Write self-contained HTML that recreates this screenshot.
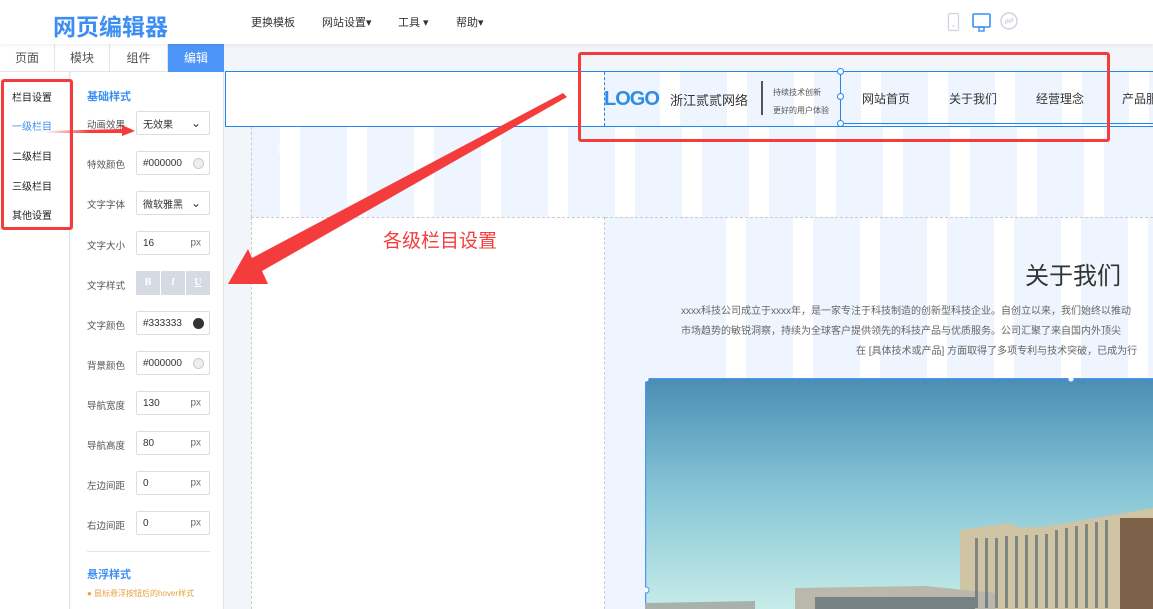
<!DOCTYPE html>
<html><head><meta charset="utf-8"><style>
*{margin:0;padding:0;box-sizing:border-box}
body{width:1153px;height:609px;overflow:hidden;position:relative;background:#f2f5f9;font-family:"Liberation Sans","Noto Sans CJK SC",sans-serif;font-size:10px;color:#333}
.abs{position:absolute}
.top{left:0;top:0;width:1153px;height:44px;background:#fff;box-shadow:0 1px 4px rgba(0,0,0,.08);z-index:3}
.menu span{position:absolute;top:14px;font-size:11px;color:#333}
.tabs{left:0;top:44px;width:224px;height:28px;background:#fff;border-bottom:1px solid #e5e5e5}
.tabs div{position:absolute;top:0;height:28px;line-height:28px;text-align:center;font-size:12px;color:#555;border-right:1px solid #e5e5e5}
.lnav{left:0;top:72px;width:70px;height:537px;background:#fff;border-right:1px solid #e5e5e5}
.lnav div{position:absolute;left:12px;font-size:10px;color:#222}
.panel{left:71px;top:72px;width:153px;height:537px;background:#fff;border-right:1px solid #e5e5e5}
.lab{position:absolute;left:16px;font-size:9.5px;color:#555}
.inp{position:absolute;left:65px;width:74px;height:24px;border:1px solid #ddd;border-radius:2px;background:#fff;font-size:10px;display:flex;align-items:center;padding-left:6px;color:#333}
.inp .px{position:absolute;right:8px;top:50%;transform:translateY(-50%);color:#666}
.inp .dot{position:absolute;right:5px;top:6px;width:11px;height:11px;border-radius:50%}
.stripe{background:repeating-linear-gradient(90deg,#eef5fe 0,#eef5fe 47px,#fff 47px,#fff 67px)}
</style></head><body>
<div class="abs top">
 <div class="abs" style="left:53px;top:8px;font-size:23px;font-weight:bold;color:#3c8ef3">网页编辑器</div>
 <div class="menu"><span style="left:251px">更换模板</span><span style="left:322px">网站设置▾</span><span style="left:398px">工具 ▾</span><span style="left:456px">帮助▾</span></div>
 <svg class="abs" style="left:940px;top:10px" width="90" height="25" viewBox="0 0 90 25">
  <rect x="8.5" y="3.5" width="10" height="17" rx="1.5" fill="none" stroke="#ccd3df" stroke-width="1.2"/><line x1="12" y1="16" x2="15" y2="16" stroke="#ccd3df"/>
  <rect x="33" y="4" width="17" height="13" rx="1" fill="none" stroke="#3c8ef3" stroke-width="1.6"/><rect x="39" y="17" width="5" height="4" fill="none" stroke="#3c8ef3" stroke-width="1.4"/>
  <circle cx="69" cy="11" r="8" fill="none" stroke="#ccd3df" stroke-width="1.4"/><path d="M66 14 a2 2 0 0 1 0-3 l2-2 M72 8 a2 2 0 0 1 0 3 l-2 2 M67 13 L71 9" fill="none" stroke="#ccd3df" stroke-width="1.2"/>
 </svg>
</div>
<div class="abs tabs">
 <div style="left:0;width:55px">页面</div><div style="left:55px;width:55px">模块</div><div style="left:110px;width:58px">组件</div>
 <div style="left:168px;width:56px;background:#4d95f7;color:#fff;border:none">编辑</div>
 <div style="left:191px;top:23px;width:0;height:0;border:5px solid transparent;border-bottom-color:#fff"></div>
</div>
<div class="abs lnav">
 <div style="top:17px">栏目设置</div><div style="top:46px;color:#3c8ef3">一级栏目</div><div style="top:76px">二级栏目</div><div style="top:106px">三级栏目</div><div style="top:135px">其他设置</div>
</div>
<div class="abs panel">
 <div class="abs" style="left:16px;top:16px;font-size:11px;font-weight:bold;color:#3c8ef3">基础样式</div>
 <div class="lab" style="top:45px">动画效果</div><div class="inp" style="top:39px">无效果<span class="px" style="font-size:12px;color:#333">⌄</span></div>
 <div class="lab" style="top:85px">特效颜色</div><div class="inp" style="top:79px">#000000<span class="dot" style="border:1px solid #ccc;background:#eee"></span></div>
 <div class="lab" style="top:125px">文字字体</div><div class="inp" style="top:119px">微软雅黑<span class="px" style="font-size:12px;color:#333">⌄</span></div>
 <div class="lab" style="top:166px">文字大小</div><div class="inp" style="top:159px">16<span class="px">px</span></div>
 <div class="lab" style="top:206px">文字样式</div>
 <div class="abs" style="left:65px;top:199px;width:74px;height:24px;background:#d5dae3;display:flex"><div style="flex:1;color:#fff;font-weight:bold;text-align:center;line-height:24px;font-family:'Liberation Serif',serif;border-right:1px solid #fff">B</div><div style="flex:1;color:#fff;font-style:italic;font-weight:bold;text-align:center;line-height:24px;font-family:'Liberation Serif',serif;border-right:1px solid #fff">I</div><div style="flex:1;color:#fff;text-decoration:underline;font-weight:bold;text-align:center;line-height:24px;font-family:'Liberation Serif',serif">U</div></div>
 <div class="lab" style="top:246px">文字颜色</div><div class="inp" style="top:239px">#333333<span class="dot" style="background:#333"></span></div>
 <div class="lab" style="top:286px">背景颜色</div><div class="inp" style="top:279px">#000000<span class="dot" style="border:1px solid #ccc;background:#eee"></span></div>
 <div class="lab" style="top:326px">导航宽度</div><div class="inp" style="top:319px">130<span class="px">px</span></div>
 <div class="lab" style="top:366px">导航高度</div><div class="inp" style="top:359px">80<span class="px">px</span></div>
 <div class="lab" style="top:406px">左边间距</div><div class="inp" style="top:399px">0<span class="px">px</span></div>
 <div class="lab" style="top:446px">右边间距</div><div class="inp" style="top:439px">0<span class="px">px</span></div>
 <div class="abs" style="left:16px;top:479px;width:123px;border-top:1px solid #e5e5e5"></div>
 <div class="abs" style="left:16px;top:494px;font-size:11px;font-weight:bold;color:#3c8ef3">悬浮样式</div>
 <div class="abs" style="left:16px;top:516px;font-size:8px;color:#e8a23a">● 鼠标悬浮按钮后的hover样式</div>
</div>
<!-- canvas -->
<div class="abs stripe" style="left:251px;top:127px;width:902px;height:90px;border-left:1px dashed #ccc;background-position:-19px 0"></div>
<div class="abs" style="left:251px;top:217px;width:354px;height:392px;background:#fff;border-top:1px dashed #ccc;border-left:1px dashed #ccc;border-right:1px dashed #ccc"></div>
<div class="abs stripe" style="left:605px;top:217px;width:548px;height:392px;border-top:1px dashed #ccc;background-position:7px 0"></div>
<div class="abs" style="left:636px;top:218px;width:90px;height:391px;background:#eef5fe"></div>
<div class="abs" style="left:265px;top:134px;color:#fff;font-size:20px">〈</div>
<div class="abs" style="left:1025px;top:256px;font-size:24px;color:#333">关于我们</div>
<div class="abs" style="left:681px;top:302px;font-size:10px;color:#666;white-space:nowrap;line-height:20px">xxxx科技公司成立于xxxx年，是一家专注于科技制造的创新型科技企业。自创立以来，我们始终以推动<br>市场趋势的敏锐洞察，持续为全球客户提供领先的科技产品与优质服务。公司汇聚了来自国内外顶尖<br><span style="padding-left:175px">在 [具体技术或产品] 方面取得了多项专利与技术突破，已成为行</span></div>
<svg class="abs" style="left:645px;top:378px" width="508" height="231" viewBox="0 0 508 231">
 <defs><linearGradient id="sky" x1="0" y1="0" x2="0" y2="1"><stop offset="0" stop-color="#4a8db5"/><stop offset=".5" stop-color="#88c6d6"/><stop offset="1" stop-color="#c6ece9"/></linearGradient></defs>
 <rect width="508" height="231" fill="url(#sky)"/>
 <rect x="0" y="0" width="508" height="1.2" fill="#4d95f7"/><rect x="0" y="0" width="1.2" height="231" fill="#4d95f7"/>
 <path d="M315 152 L365 145 L375 150 L405 148 L508 130 L508 231 L315 231Z" fill="#cfc4a4"/>
 <path d="M150 210 L280 208 L350 215 L350 231 L150 231Z" fill="#b9b8ab"/>
 <path d="M0 225 L110 223 L110 231 L0 231Z" fill="#a9b1ad"/>
 <rect x="475" y="140" width="33" height="91" fill="#7c6048"/>
 <g fill="#4c5e6a" opacity=".6"><rect x="330" y="160" width="3" height="70"/><rect x="340" y="160" width="3" height="70"/><rect x="350" y="160" width="3" height="70"/><rect x="360" y="158" width="3" height="72"/><rect x="370" y="158" width="3" height="72"/><rect x="380" y="157" width="3" height="73"/><rect x="390" y="157" width="3" height="73"/><rect x="400" y="156" width="3" height="74"/><rect x="410" y="152" width="3" height="78"/><rect x="420" y="150" width="3" height="80"/><rect x="430" y="148" width="3" height="82"/><rect x="440" y="146" width="3" height="84"/><rect x="450" y="144" width="3" height="86"/><rect x="460" y="142" width="3" height="88"/><rect x="170" y="219" width="160" height="12"/></g>
 <circle cx="1" cy="1" r="3" fill="#fff" stroke="#4d95f7"/><circle cx="426" cy="1" r="3" fill="#fff" stroke="#4d95f7"/><circle cx="1" cy="212" r="3" fill="#fff" stroke="#4d95f7"/>
</svg>
<!-- header module -->
<div class="abs" style="left:225px;top:71px;width:928px;height:56px;background:#fff;border:1px solid #1e88f0;border-right:none"></div>
<div class="abs stripe" style="left:604px;top:72px;width:549px;height:54px;background-position:8px 0;border-left:1px dashed #1e88f0"></div>
<div class="abs" style="left:604px;top:88px;font-size:20px;font-weight:bold;color:#2f8de4;letter-spacing:-1px">LOGO</div>
<div class="abs" style="left:670px;top:90px;font-size:13px;color:#333">浙江贰贰网络</div>
<div class="abs" style="left:761px;top:81px;width:2px;height:34px;background:#555"></div>
<div class="abs" style="left:773px;top:84px;font-size:8px;color:#555;line-height:18px">持续技术创新<br>更好的用户体验</div>
<div class="abs" style="left:840px;top:72px;width:313px;height:52px;border-left:1px solid #1e88f0;border-bottom:1px solid #1e88f0"></div>
<div class="abs" style="left:837px;top:93px;width:7px;height:7px;border-radius:50%;background:#fff;border:1px solid #1e88f0"></div>
<div class="abs" style="left:837px;top:120px;width:7px;height:7px;border-radius:50%;background:#fff;border:1px solid #1e88f0"></div>
<div class="abs" style="left:837px;top:68px;width:7px;height:7px;border-radius:50%;background:#fff;border:1px solid #1e88f0"></div>
<div class="abs" style="left:862px;top:90px;font-size:12px;color:#333">网站首页</div>
<div class="abs" style="left:949px;top:90px;font-size:12px;color:#333">关于我们</div>
<div class="abs" style="left:1036px;top:90px;font-size:12px;color:#333">经营理念</div>
<div class="abs" style="left:1122px;top:90px;font-size:12px;color:#333;white-space:nowrap">产品服务</div>
<!-- annotations -->
<div class="abs" style="left:1px;top:79px;width:72px;height:151px;border:3px solid #f53c3c;border-radius:3px"></div>
<div class="abs" style="left:578px;top:52px;width:532px;height:90px;border:3px solid #f53c3c;border-radius:3px"></div>
<svg class="abs" style="left:0;top:0" width="1153" height="609">
 <defs><linearGradient id="sa" x1="0" x2="1"><stop offset="0" stop-color="#f53c3c" stop-opacity="0"/><stop offset=".5" stop-color="#f53c3c"/></linearGradient></defs>
 <polygon points="45,131 122,129 122,125 135,131 122,136 122,133 45,133" fill="url(#sa)"/>
 <polygon points="228,284 248,249 252,258 563,93 567,97 262,271 268,284" fill="#f53c3c"/>
</svg>
<div class="abs" style="left:383px;top:226px;font-size:19px;color:#f53c3c">各级栏目设置</div>
</body></html>
